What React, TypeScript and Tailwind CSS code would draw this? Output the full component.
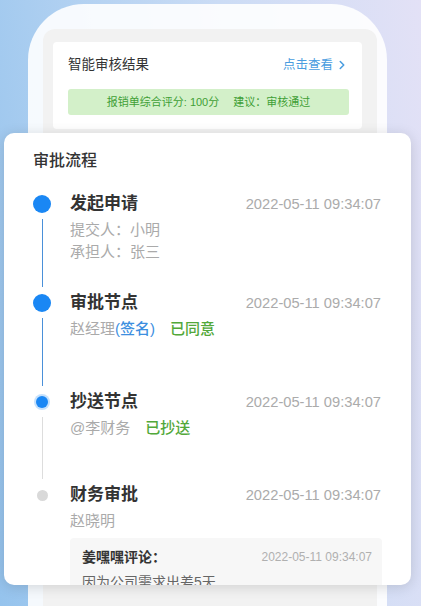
import React from "react";
import { ChevronRight } from "lucide-react";

const font = "font-['Liberation_Sans','Noto_Sans_CJK_SC',sans-serif]";

type Step = {
  title: string;
  time: string;
  dot: "big" | "glow" | "gray";
  line?: "blue" | "gray";
  height: string;
  children: React.ReactNode;
};

function Dot({ kind }: { kind: Step["dot"] }) {
  if (kind === "big") return <div className="size-[18px] rounded-full bg-[#1a87f4]" />;
  if (kind === "glow")
    return <div className="size-[12px] rounded-full bg-[#1a87f4] shadow-[0_0_0_2px_rgba(26,135,244,0.25)]" />;
  return <div className="size-[11px] rounded-full bg-[#d9d9d9]" />;
}

function TimelineItem({ step }: { step: Step }) {
  return (
    <div className={`flex ${step.height}`}>
      <div className="flex w-[18px] flex-col items-center">
        <div className="flex h-[24px] items-center">
          <Dot kind={step.dot} />
        </div>
        {step.line && (
          <div
            className={`mt-[3px] mb-[4px] w-px flex-1 ${
              step.line === "blue" ? "bg-[#4a90d9]" : "bg-[#dddddd]"
            }`}
          />
        )}
      </div>
      <div className="ml-[19px] flex-1">
        <div className="flex items-center justify-between">
          <h3 className="text-[17px] leading-[24px] font-bold text-[#333]">{step.title}</h3>
          <span className="mr-[1px] text-[14.7px] leading-[24px] text-[#ababab]">{step.time}</span>
        </div>
        <div className="mt-[3px] text-[15px] leading-[22px] text-[#aaaaaa]">{step.children}</div>
      </div>
    </div>
  );
}

export default function App() {
  const time = "2022-05-11 09:34:07";
  const steps: Step[] = [
    {
      title: "发起申请",
      time,
      dot: "big",
      line: "blue",
      height: "h-[99px]",
      children: (
        <>
          <p>提交人：小明</p>
          <p>承担人：张三</p>
        </>
      ),
    },
    {
      title: "审批节点",
      time,
      dot: "big",
      line: "blue",
      height: "h-[99px]",
      children: (
        <p>
          赵经理<span className="font-medium text-[#3d8fdf]">(签名)</span>
          <span className="ml-[15px] font-medium text-[#52a83a]">已同意</span>
        </p>
      ),
    },
    {
      title: "抄送节点",
      time,
      dot: "glow",
      line: "gray",
      height: "h-[93px]",
      children: (
        <p>
          @李财务<span className="ml-[15px] font-medium text-[#52a83a]">已抄送</span>
        </p>
      ),
    },
  ];

  return (
    <div
      className={`relative h-[606px] w-[421px] overflow-hidden bg-[linear-gradient(262deg,#e3e1f6_0%,#cbdcf5_40%,#a9cdf0_78%,#95c3ed_100%)] ${font}`}
    >
      {/* phone mock behind */}
      <div className="ml-[28px] mt-[4px] h-[640px] w-[359px] rounded-t-[56px] bg-white/90 pt-[25px] pl-[15px] pr-[10px]">
        <div className="h-full rounded-t-[12px] bg-[#f2f2f2] pt-[13px] pl-[10px] pr-[15px]">
          <div className="rounded-[4px] bg-white px-[15px] pt-[13px] pb-[14px] pr-[13px]">
            <div className="flex items-center justify-between">
              <span className="text-[13.5px] leading-[20px] text-[#333]">智能审核结果</span>
              <span className="flex items-center text-[12.5px] leading-[20px] text-[#4a9de0]">
                点击查看
                <ChevronRight className="ml-[2px] size-[14px]" strokeWidth={2.6} />
              </span>
            </div>
            <div className="mt-[14px] flex h-[26px] items-center justify-center rounded-[3px] bg-[#d3f0c9] text-[11px] text-[#3f9f36]">
              报销单综合评分: 100分<span className="ml-[14px]">建议：审核通过</span>
            </div>
          </div>
        </div>
      </div>

      {/* approval flow card */}
      <div className="absolute top-[133px] left-[4px] h-[452px] w-[407px] overflow-hidden rounded-[10px] bg-white pt-[17px] pl-[29px] pr-[29px] shadow-[0_2px_14px_rgba(0,0,0,0.14)]">
        <h2 className="text-[16px] leading-[22px] font-medium text-[#333]">审批流程</h2>
        <div className="mt-[20px]">
          {steps.map((s) => (
            <TimelineItem key={s.title} step={s} />
          ))}
          <div className="flex">
            <div className="flex w-[18px] flex-col items-center">
              <div className="flex h-[24px] items-center">
                <Dot kind="gray" />
              </div>
            </div>
            <div className="ml-[19px] flex-1">
              <div className="flex items-center justify-between">
                <h3 className="text-[17px] leading-[24px] font-bold text-[#333]">财务审批</h3>
                <span className="mr-[1px] text-[14.7px] leading-[24px] text-[#ababab]">{time}</span>
              </div>
              <p className="mt-[3px] text-[15px] leading-[22px] text-[#aaaaaa]">赵晓明</p>
              <div className="mt-[6px] rounded-[4px] bg-[#f7f7f7] pt-[9px] pr-[10px] pl-[12px] pb-[10px]">
                <div className="flex items-center justify-between">
                  <span className="text-[14px] leading-[20px] font-bold text-[#333]">姜嘿嘿评论：</span>
                  <span className="text-[12px] leading-[20px] text-[#b0b0b0]">{time}</span>
                </div>
                <p className="mt-[5px] text-[14px] leading-[20px] text-[#666]">因为公司需求出差5天</p>
              </div>
            </div>
          </div>
        </div>
      </div>
    </div>
  );
}
